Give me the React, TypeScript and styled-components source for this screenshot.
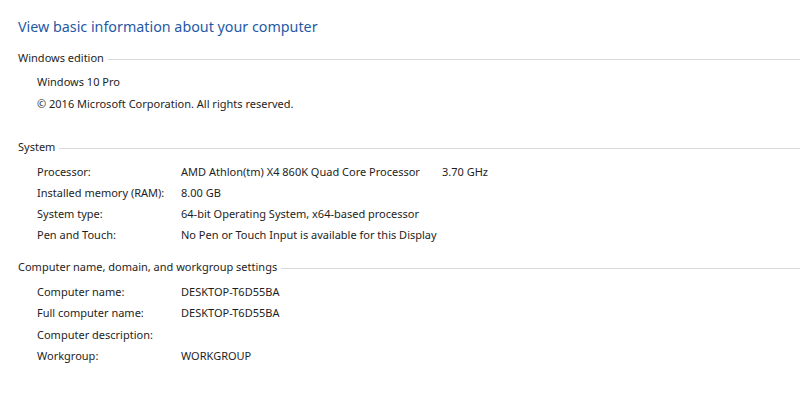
import React from "react";
import styled, { createGlobalStyle } from "styled-components";

const GlobalStyle = createGlobalStyle`
  html, body {
    margin: 0;
    padding: 0;
    background: #ffffff;
  }
  body {
    font-family: "Noto Sans", "Open Sans", sans-serif;
    font-size: 11px;
    color: #1e1e1e;
  }
`;

const Page = styled.div`
  width: 800px;
  height: 413px;
  padding: 17px 0 0 18px;
  box-sizing: border-box;
  overflow: hidden;
`;

const Title = styled.h1`
  margin: 0;
  font-size: 14.3px;
  font-weight: 400;
  line-height: 20px;
  color: #1f5aa6;
`;

const Section = styled.section<{ $top: number }>`
  margin-top: ${({ $top }) => $top}px;
`;

const SectionHeader = styled.div`
  display: flex;
  align-items: center;
  height: 20px;
  line-height: 20px;
  &::after {
    content: "";
    flex: 1;
    height: 1px;
    margin-left: 4px;
    margin-top: 2px;
    background: #d9d9d9;
  }
`;

const Rows = styled.div<{ $gap: number }>`
  margin-top: ${({ $gap }) => $gap}px;
  padding-left: 19px;
`;

const Row = styled.div<{ $height: number }>`
  display: grid;
  grid-template-columns: 144px auto;
  height: ${({ $height }) => $height}px;
  line-height: ${({ $height }) => $height}px;
  white-space: nowrap;
`;

const PlainRow = styled.div<{ $height: number }>`
  height: ${({ $height }) => $height}px;
  line-height: ${({ $height }) => $height}px;
  white-space: nowrap;
`;

const Value = styled.span<{ $width?: number }>`
  display: inline-block;
  width: ${({ $width }) => ($width ? `${$width}px` : "auto")};
`;

type Item = { label?: string; value?: string; extra?: string };

const edition: Item[] = [
  { value: "Windows 10 Pro" },
  { value: "© 2016 Microsoft Corporation. All rights reserved." },
];

const system: Item[] = [
  { label: "Processor:", value: "AMD Athlon(tm) X4 860K Quad Core Processor", extra: "3.70 GHz" },
  { label: "Installed memory (RAM):", value: "8.00 GB" },
  { label: "System type:", value: "64-bit Operating System, x64-based processor" },
  { label: "Pen and Touch:", value: "No Pen or Touch Input is available for this Display" },
];

const computer: Item[] = [
  { label: "Computer name:", value: "DESKTOP-T6D55BA" },
  { label: "Full computer name:", value: "DESKTOP-T6D55BA" },
  { label: "Computer description:", value: "" },
  { label: "Workgroup:", value: "WORKGROUP" },
];

export default function App() {
  return (
    <>
      <GlobalStyle />
      <Page>
        <Title>View basic information about your computer</Title>

        <Section $top={11}>
          <SectionHeader>Windows edition</SectionHeader>
          <Rows $gap={3}>
            {edition.map((it, i) => (
              <PlainRow key={i} $height={22}>
                {it.value}
              </PlainRow>
            ))}
          </Rows>
        </Section>

        <Section $top={22}>
          <SectionHeader>System</SectionHeader>
          <Rows $gap={4}>
            {system.map((it) => (
              <Row key={it.label} $height={21}>
                <span>{it.label}</span>
                <span>
                  <Value $width={it.extra ? 261 : undefined}>{it.value}</Value>
                  {it.extra && <Value>{it.extra}</Value>}
                </span>
              </Row>
            ))}
          </Rows>
        </Section>

        <Section $top={12}>
          <SectionHeader>Computer name, domain, and workgroup settings</SectionHeader>
          <Rows $gap={4}>
            {computer.map((it) => (
              <Row key={it.label} $height={21.3}>
                <span>{it.label}</span>
                <span>{it.value}</span>
              </Row>
            ))}
          </Rows>
        </Section>
      </Page>
    </>
  );
}
